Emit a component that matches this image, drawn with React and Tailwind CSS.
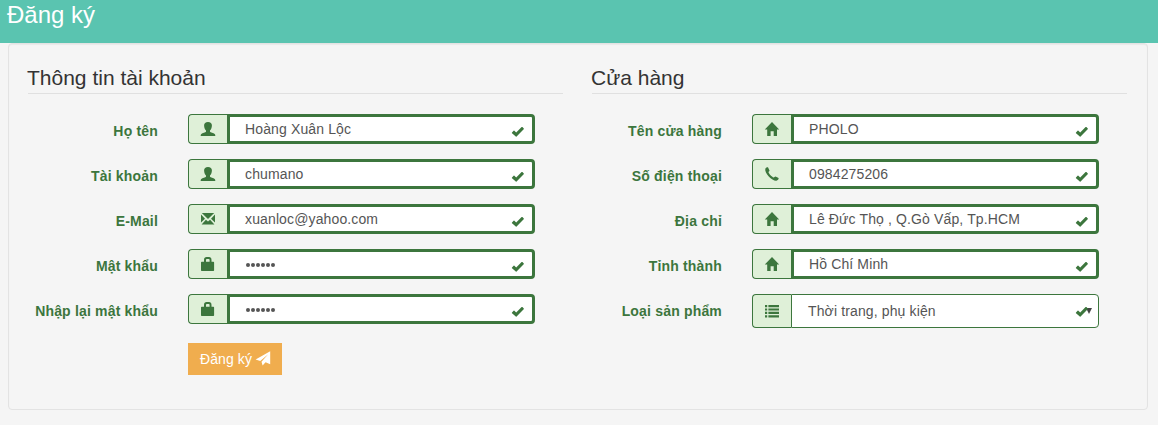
const GLYPHS = {
  user: 'M7 -.1C9.5 -.1 10.9 1.2 10.9 3.3C10.9 5.3 10.3 7.2 9 8.6V9.7C9.3 10.4 12.7 11 13.7 12C14.3 12.6 14.3 13.4 14.3 14H-.3C-.3 13.4 -.3 12.6 .3 12C1.3 11 4.7 10.4 5 9.7V8.6C3.7 7.2 3.1 5.3 3.1 3.3C3.1 1.2 4.5 -.1 7 -.1Z',
  mail: 'M.8 1H13.2L7 7ZM0 2.6L4 6.7L0 10.5ZM14 2.6V10.5L10 6.7ZM4.9 7.8L7 9.6L9.1 7.8L13.4 12.5H.6Z',
  lock: 'M3 4.7V3C3 1 4 .1 5.5 .1H8C9.5 .1 10.5 1 10.5 3V4.7H12.4Q13.1 4.7 13.1 5.5V13.3Q13.1 14 12.4 14H.7Q0 14 0 13.3V5.5Q0 4.7 .7 4.7ZM5 4.7H8.6V3Q8.6 2 7.8 2H5.8Q5 2 5 3Z',
  home: 'M7 0L14.2 7.5H12V14H8.7V9.2H5.6V14H2.2V7.5H-.2Z',
  phone: 'M.3 1.7C1.2 .5 2.5 .1 3.1 .4L4.5 3.5C4.6 4.3 3.4 4.7 3.5 5.2C3.8 6.6 6.9 9.9 8.6 10.4C9.3 10.5 9.8 9.3 10.5 9.4L13.6 11.1C14 12.2 12.6 13.5 11.4 13.8C7.7 14.4 -.8 6.1 .3 1.7Z',
  list: 'M0 1H2.2V3.2H0ZM3.4 1H14V3.2H3.4ZM0 4.4H2.2V6.6H0ZM3.4 4.4H14V6.6H3.4ZM0 7.8H2.2V10H0ZM3.4 7.8H14V10H3.4ZM0 11.2H2.2V13.4H0ZM3.4 11.2H14V13.4H3.4Z',
  ok: 'M1 7.4L2.6 5.8Q3 5.4 3.4 5.8L5.2 7.4L10.6 2.1Q11 1.7 11.4 2.1L12.8 3.5Q13.1 3.9 12.7 4.3L5.6 11.5Q5.2 11.9 4.8 11.5L1 8.2Q.6 7.8 1 7.4Z',
  send: 'M14.2 -.8V12.2L9.6 10.3L6.6 13.6L5.5 9.8L12.2 2.2L4.2 9L-.4 7.6Z',
};

function Glyph({ name, className = '' }) {
  return (
    <svg viewBox="0 0 14 14" className={`block size-3.5 shrink-0 overflow-visible fill-current ${className}`} fillRule="evenodd" aria-hidden="true">
      <path d={GLYPHS[name]} />
    </svg>
  );
}

function Field({ label, icon, value, password, select }) {
  return (
    <div className="flex text-[#3c763d]">
      <label className="mr-[30px] w-[130px] shrink-0 pt-[7px] text-right text-sm font-bold tracking-[0.18px] whitespace-nowrap">{label}</label>
      <div className={`relative flex w-[347px] ${select ? 'h-[34px]' : 'h-[30px]'}`}>
        <span className={`flex w-[39px] shrink-0 justify-center rounded-l border border-r-0 border-[#3c763d] bg-[#dff0d8] ${select ? 'pt-[9px]' : 'pt-[7px]'}`}>
          <Glyph name={icon} />
        </span>
        {select ? (
          <div className="flex flex-1 items-center justify-between rounded-r border border-[#3c763d] bg-white pr-[6px] pl-4 text-sm tracking-[0.13px] text-[#555]">
            <span>{value}</span>
            <svg viewBox="0 0 6 6" className="size-1.5 fill-[#444]"><path d="M0 0H6L3 6Z" /></svg>
          </div>
        ) : (
          <div className="flex flex-1 items-center rounded-r border-[3px] border-[#3c763d] bg-white pl-[15px] text-sm tracking-[0.13px] text-[#555]">
            {password ? (
              <span className="flex gap-px pt-px pl-px">
                {[0, 1, 2, 3, 4, 5].map((n) => (
                  <i key={n} className="size-1 rounded-full bg-[#555]" />
                ))}
              </span>
            ) : value}
          </div>
        )}
        <Glyph name="ok" className="absolute top-[11px] right-[10px]" />
      </div>
    </div>
  );
}

function Section({ title, children }) {
  return (
    <section className="w-[535px]">
      <h2 className="mb-5 h-[31px] border-b border-[#e0e0e0] text-[21px] leading-[30px] text-[#333]"><span className="-ml-px">{title}</span></h2>
      <div className="flex flex-col gap-[15px]">{children}</div>
    </section>
  );
}

export default function App() {
  return (
    <div className="h-[425px] overflow-hidden bg-[#f5f5f5] font-['Liberation_Sans',Arial,sans-serif] text-sm leading-5">
      <header className="h-[43px] bg-[#5ac4b0] pl-[7px] text-2xl leading-[30px] text-white">Đăng ký</header>
      <main className="mx-2 mr-[10px] flex h-[367px] gap-[29px] rounded border border-[#e3e3e3] bg-[#f5f5f5] pt-[19px] pl-[19px] shadow-[inset_0_1px_1px_rgba(0,0,0,0.05)]">
        <Section title="Thông tin tài khoản">
          <Field label="Họ tên" icon="user" value="Hoàng Xuân Lộc" />
          <Field label="Tài khoản" icon="user" value="chumano" />
          <Field label="E-Mail" icon="mail" value="xuanloc@yahoo.com" />
          <Field label="Mật khẩu" icon="lock" password />
          <Field label="Nhập lại mật khẩu" icon="lock" password />
          <button className="mt-1 ml-40 flex h-8 w-[94px] items-center gap-1 bg-[#f0ad4e] pl-3 text-sm tracking-[0.1px] whitespace-nowrap text-white">
            Đăng ký <Glyph name="send" />
          </button>
        </Section>
        <Section title="Cửa hàng">
          <Field label="Tên cửa hàng" icon="home" value="PHOLO" />
          <Field label="Số điện thoại" icon="phone" value="0984275206" />
          <Field label="Địa chỉ" icon="home" value="Lê Đức Thọ , Q.Gò Vấp, Tp.HCM" />
          <Field label="Tỉnh thành" icon="home" value="Hồ Chí Minh" />
          <Field label="Loại sản phẩm" icon="list" value="Thời trang, phụ kiện" select />
        </Section>
      </main>
    </div>
  );
}
